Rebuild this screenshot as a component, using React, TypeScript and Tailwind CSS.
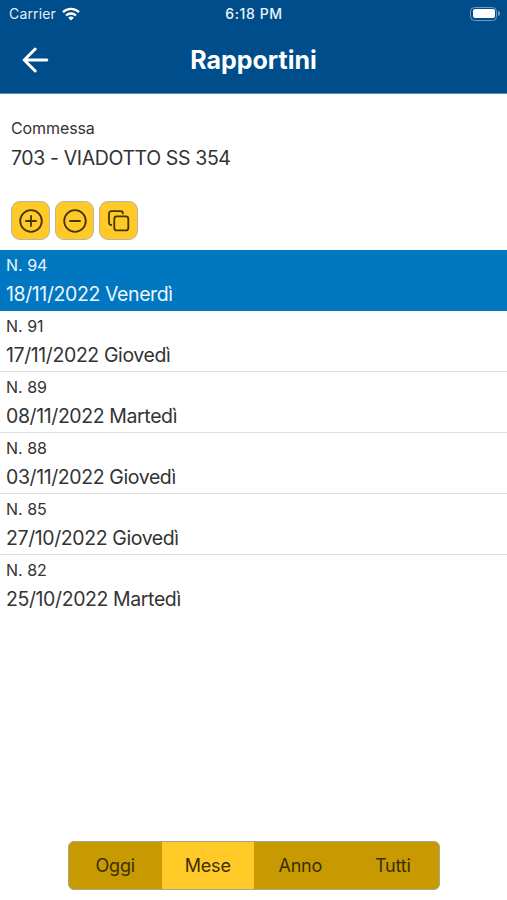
const reports = [
  { number: 94, date: "18/11/2022 Venerdì" },
  { number: 91, date: "17/11/2022 Giovedì" },
  { number: 89, date: "08/11/2022 Martedì" },
  { number: 88, date: "03/11/2022 Giovedì" },
  { number: 85, date: "27/10/2022 Giovedì" },
  { number: 82, date: "25/10/2022 Martedì" },
];

const periods = ["Oggi", "Mese", "Anno", "Tutti"];

const actionClass =
  "flex h-[39px] w-[39px] items-center justify-center rounded-[9px] border border-[#b9b6a8] bg-[#ffc928] text-[#443606]";

function StatusBar() {
  return (
    <div className="grid h-[27px] grid-cols-3 items-center pl-[9px] pr-[7px]">
      <div className="flex items-center gap-[6px] text-[14px] tracking-[0.15px] text-[#e4edf5]">
        <span>Carrier</span>
        <svg width="18" height="14" viewBox="0 0 18 14" fill="none" stroke="white" strokeWidth="2.3">
          <path d="M1 5.2a11.5 11.5 0 0 1 16 0" />
          <path d="M4 8.5a7.2 7.2 0 0 1 10 0" />
          <path d="M9 13.6 6.1 10.8a4.2 4.2 0 0 1 5.8 0Z" fill="white" stroke="none" />
        </svg>
      </div>
      <div className="pr-px text-center text-[14px] font-medium tracking-[0.6px] text-[#edf4fa]">6:18 PM</div>
      <div className="flex items-center justify-end gap-px">
        <div className="h-[14px] w-[27px] rounded-[4.5px] border border-[#6d9bc3] p-[1.5px]">
          <div className="h-full rounded-[2px] bg-white" />
        </div>
        <div className="h-[5px] w-[2px] rounded-r-full bg-[#6d9bc3]" />
      </div>
    </div>
  );
}

export default function App() {
  return (
    <main className="flex h-[900px] w-full flex-col bg-white font-['Inter',sans-serif] text-[#333333]">
      <header className="h-[94px] border-b border-[#5d8db7] bg-[#004d8b] text-white">
        <StatusBar />
        <div className="grid h-[66px] grid-cols-[70px_1fr_70px] items-center">
          <button className="pl-[22px]" aria-label="Indietro">
            <svg width="27" height="26" viewBox="0 0 27 26" fill="none" stroke="currentColor" strokeWidth="3" strokeLinecap="round" strokeLinejoin="round">
              <path d="M13.2 2 2.2 13l11 11M2.4 13h22.4" />
            </svg>
          </button>
          <h1 className="pt-px text-center text-[25px] font-bold">Rapportini</h1>
        </div>
      </header>

      <section className="h-[156px] px-[11px] pt-[23px]">
        <div className="text-[16px] leading-[22px] tracking-[-0.1px]">Commessa</div>
        <div className="mt-[5px] text-[19.5px] leading-[28px] tracking-[-0.38px]">703 - VIADOTTO SS 354</div>
        <div className="mt-[29px] flex gap-[5px]">
          <button className={actionClass} aria-label="Aggiungi">
            <svg width="24" height="24" viewBox="0 0 24 24" fill="none" stroke="currentColor" strokeWidth="1.8" strokeLinecap="round">
              <circle cx="12" cy="12" r="10.8" />
              <path d="M12 7v10M7 12h10" />
            </svg>
          </button>
          <button className={actionClass} aria-label="Rimuovi">
            <svg width="24" height="24" viewBox="0 0 24 24" fill="none" stroke="currentColor" strokeWidth="1.8" strokeLinecap="round">
              <circle cx="12" cy="12" r="10.8" />
              <path d="M7 12h10" />
            </svg>
          </button>
          <button className={actionClass} aria-label="Duplica">
            <svg width="22" height="22" viewBox="0 0 22 22" fill="none" stroke="currentColor" strokeWidth="1.8" strokeLinecap="round">
              <rect x="6.3" y="6.4" width="14" height="14" rx="2.5" />
              <path d="M3.3 15A2.3 2.3 0 0 1 1 12.7V3.4a2.3 2.3 0 0 1 2.3-2.3h9.3a2.3 2.3 0 0 1 2.3 2.3" />
            </svg>
          </button>
        </div>
      </section>

      <ul>
        {reports.map((report, i) => (
          <li
            key={report.number}
            className={
              i === 0
                ? "h-[61px] bg-[#0077c0] px-[6px] pt-[4px] text-[#edf6fc]"
                : i === reports.length - 1
                  ? "h-[61px] px-[6px] pt-[4px]"
                  : "h-[61px] border-b border-[#dedede] px-[6px] pt-[4px]"
            }
          >
            <div className="text-[16px] leading-[22px]">N. {report.number}</div>
            <div className="mt-[4px] text-[19.5px] leading-[28px] tracking-[-0.4px]">{report.date}</div>
          </li>
        ))}
      </ul>

      <nav className="mt-auto mb-[10px] ml-[68px] flex h-[49px] w-[372px] overflow-hidden rounded-[6px] border border-[#aaa687] bg-[#c69a00] text-[18px] tracking-[-0.2px] text-[#3b2f05]">
        {periods.map((period) => (
          <button key={period} className={period === "Mese" ? "flex-1 bg-[#ffc928]" : "flex-1"}>
            {period}
          </button>
        ))}
      </nav>
    </main>
  );
}
